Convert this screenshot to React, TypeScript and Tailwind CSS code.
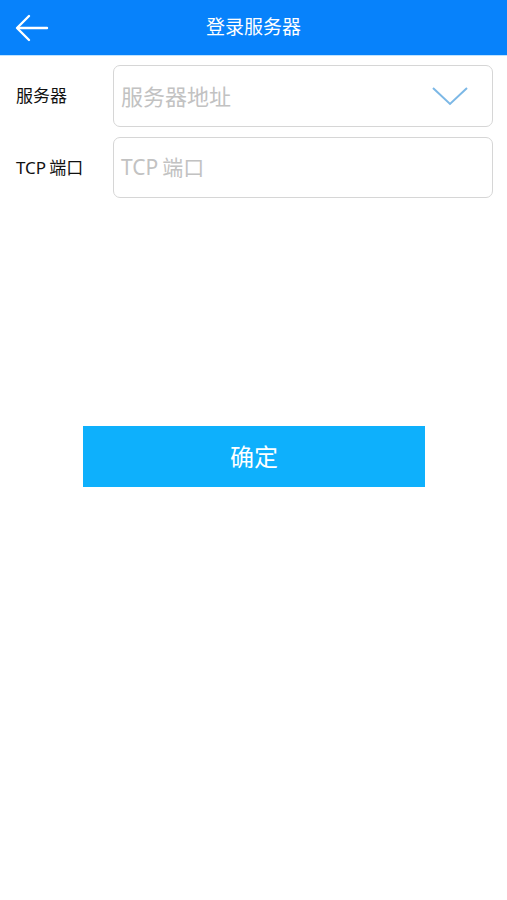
import React from "react";

export default function App() {
  const font = { fontFamily: '"Noto Sans", "Noto Sans CJK SC", sans-serif' };
  return (
    <div className="w-[507px] h-[900px] bg-white" style={font}>
      <div className="h-[56px] bg-[#0782fb] flex items-center relative border-b border-[#bfe3ff]">
        <div className="absolute left-[15px] top-[13px]">
          <svg width="34" height="30" viewBox="0 0 34 30" fill="none" stroke="white" strokeWidth="2.4" strokeLinecap="round" strokeLinejoin="round">
            <path d="M32 15H3" />
            <path d="M14 3L2 15L14 27" />
          </svg>
        </div>
        <div className="flex-1 text-center text-white text-[19px] leading-none">登录服务器</div>
      </div>
      <div className="pt-[9px] pr-[14px]">
        <div className="flex items-center">
          <div className="w-[113px] pl-[16px] text-[17px] text-[#111]">服务器</div>
          <div className="flex-1 h-[62px] border border-[#d6d6d6] rounded-[7px] flex items-center pl-[7px] pr-[24px]">
            <span className="flex-1 text-[22px] text-[#c2c2c2]">服务器地址</span>
            <svg width="36" height="20" viewBox="0 0 36 20" fill="none" stroke="#7cb8e6" strokeWidth="2">
              <path d="M1 2L18 18L35 2" />
            </svg>
          </div>
        </div>
        <div className="flex items-center mt-[10px]">
          <div className="w-[113px] pl-[16px] text-[17px] text-[#111]">TCP<span className="ml-[3px]">端口</span></div>
          <div className="flex-1 h-[61px] border border-[#d6d6d6] rounded-[7px] flex items-center pl-[7px]">
            <span className="text-[21px] text-[#c2c2c2]">TCP<span className="ml-[4px]">端口</span></span>
          </div>
        </div>
      </div>
      <div className="flex justify-center mt-[228px] pl-[1px]">
        <button className="w-[342px] h-[61px] bg-[#0eb0fc] text-white text-[24px]">确定</button>
      </div>
    </div>
  );
}
